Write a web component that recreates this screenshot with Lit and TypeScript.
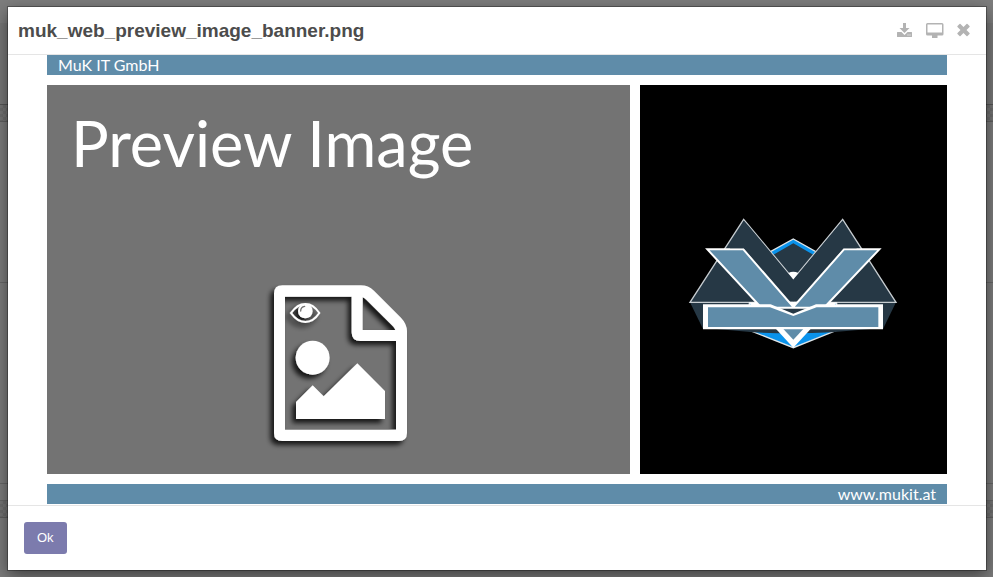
import { LitElement, html, css } from "lit";
import { customElement } from "lit/decorators.js";

@customElement("preview-banner")
class PreviewBanner extends LitElement {
  static styles = css`
    :host {
      flex: 1;
      display: flex;
      flex-direction: column;
      gap: 10px;
      color: #fff;
      font-family: Lato, sans-serif;
    }
    .strip {
      display: flex;
      align-items: center;
      flex: none;
      height: 20px;
      padding: 0 11px;
      background: #5f8ca9;
      font-size: 16px;
      line-height: 20px;
    }
    .end {
      justify-content: flex-end;
    }
    .panels {
      flex: 1;
      display: grid;
      grid-template-columns: 583fr 307fr;
      gap: 10px;
    }
    .gray {
      display: flex;
      flex-direction: column;
      background: #737373;
    }
    .title {
      margin: 0;
      padding: 18px 24px 0;
      font-size: 63px;
      line-height: 80px;
      font-weight: 400;
      white-space: nowrap;
    }
    .file {
      align-self: center;
      width: 170px;
      height: 180px;
      margin-top: auto;
      margin-left: 2px;
      margin-bottom: 19px;
    }
    .dark {
      display: flex;
      align-items: center;
      justify-content: center;
      padding: 5px 0 0 2px;
      background: #000;
    }
    .logo {
      width: 230px;
      height: 155px;
    }
  `;

  render() {
    return html`
      <div class="strip">MuK IT GmbH</div>
      <div class="panels">
        <div class="gray">
          <h2 class="title">Preview Image</h2>
          ${this.fileIcon()}
        </div>
        <div class="dark">${this.logo()}</div>
      </div>
      <div class="strip end">www.mukit.at</div>
    `;
  }

  private fileIcon() {
    return html`<svg class="file" viewBox="0 0 510 540" aria-hidden="true">
      <defs>
        <filter id="shade" x="-10%" y="-10%" width="120%" height="120%">
          <feDropShadow dx="-11" dy="12" stdDeviation="8" flood-color="#000" flood-opacity="0.8"></feDropShadow>
        </filter>
      </defs>
      <g filter="url(#shade)" fill="#fff">
        <path fill-rule="evenodd" d="M82 31H318Q340 31 357 47L438 128Q456 147 456 168V474Q456 498 432 498H82Q57 498 57 474V56Q57 31 82 31ZM90 65V464H423V198H316Q290 198 290 172V65ZM323 67V165H421Q419 159 414 154L334 74Q329 69 323 67Z"></path>
        <circle cx="173" cy="248" r="51"></circle>
        <path d="M123 381L173 331L206 364L307 265L390 348V432H123Z"></path>
        <path fill="none" stroke="#fff" stroke-width="6" d="M108 114Q127 87 151 87Q175 87 193 114Q175 141 151 141Q127 141 108 114Z"></path>
        <circle cx="151" cy="108" r="22"></circle>
        <path fill="none" stroke="#737373" stroke-width="4" stroke-linecap="round" d="M137 108Q137 96 149 94"></path>
      </g>
    </svg>`;
  }

  private logo() {
    return html`<svg class="logo" viewBox="0 0 690 465" aria-hidden="true">
      <path fill="#263845" d="M30 292L69 372H609L648 292Z"></path>
      <path fill="#0a93ec" stroke="#dfe5e8" stroke-width="4" d="M340 102L470 175V376L340 428L208 376V175Z"></path>
      <path fill="#263845" d="M340 115L450 178V330H230V178Z"></path>
      <path fill="#263845" d="M110 372H570L455 382Q340 388 220 382Z"></path>
      <path fill="#263845" stroke="#c6ccd0" stroke-width="4" d="M191 43L340 222L488 43L648 292H30Z"></path>
      <path fill="#fff" d="M325 204Q340 197 355 204L340 223Z"></path>
      <path fill="#fff" d="M206 292H472L455 308H222Z"></path>
      <path fill="#5f8ca9" stroke="#fff" stroke-width="6" d="M82 133H190L340 306L492 133H598L432 308H244Z"></path>
      <path fill="#263845" d="M340 224L205 62L191 47L150 130H192L340 290L490 130H530L488 47L475 62Z"></path>
      <path fill="#fff" d="M326 290H354L340 306Z"></path>
      <path fill="#fff" d="M286 370H394L340 428Z"></path>
      <path fill="#5f8ca9" d="M308 370H372L340 404Z"></path>
      <path fill="#fff" d="M69 298H272L340 326L408 298H609V373H69Z"></path>
      <path fill="#5f8ca9" d="M84 307H270L340 333L410 307H595V366H84Z"></path>
    </svg>`;
  }
}

@customElement("app-root")
class AppRoot extends LitElement {
  static styles = css`
    :host {
      display: block;
      font-family: "Liberation Sans", Arial, sans-serif;
      color: #4c4c4c;
    }
    .backdrop {
      box-sizing: border-box;
      display: flex;
      min-height: 100vh;
      padding: 7px 7px 7px 8px;
      background:
        linear-gradient(
          #7d7d7d 23px,
          #777 23px 104px,
          #555 104px 105px,
          transparent 105px 121px,
          #5f5f5f 121px 122px,
          #7b7b7b 122px 282px,
          #666 282px 283px,
          #7b7b7b 283px 483px,
          #666 483px 484px,
          #7b7b7b 484px 500px,
          #666 500px 501px,
          transparent 501px 517px,
          #5f5f5f 517px 518px,
          #7b7b7b 518px
        ),
        repeating-conic-gradient(#747474 0 25%, #6c6c6c 0 50%) 0 0 / 6px 6px;
    }
    .dialog {
      flex: 1;
      display: flex;
      flex-direction: column;
      background: #fff;
      box-shadow: 0 0 0 1px rgba(0, 0, 0, 0.3), 0 5px 15px rgba(0, 0, 0, 0.5);
    }
    header {
      display: flex;
      align-items: center;
      justify-content: space-between;
      box-sizing: border-box;
      height: 48px;
      padding: 0 16px 0 10px;
      border-bottom: 1px solid #e5e5e5;
    }
    h1 {
      margin: 0;
      font-size: 19px;
      line-height: 24px;
      font-weight: 700;
    }
    .tools {
      display: flex;
      align-items: center;
      gap: 13px;
      padding-bottom: 2px;
    }
    .tool {
      display: flex;
      padding: 0;
      border: 0;
      background: none;
      color: #b3b3b3;
      cursor: pointer;
    }
    .tool svg {
      display: block;
      height: 16px;
      fill: currentColor;
    }
    main {
      flex: 1;
      display: flex;
      padding: 0 39px 1px;
    }
    footer {
      padding: 16px;
      border-top: 1px solid #e5e5e5;
    }
    .ok {
      display: block;
      height: 32px;
      padding: 0 13px;
      border: 0;
      border-radius: 3px;
      background: #7c7bad;
      color: #fff;
      font: 13px/20px "Liberation Sans", Arial, sans-serif;
      cursor: pointer;
    }
  `;

  render() {
    return html`
      <div class="backdrop">
        <div class="dialog" role="dialog" aria-labelledby="name">
          <header>
            <h1 id="name">muk_web_preview_image_banner.png</h1>
            <div class="tools">
              <button class="tool" aria-label="Download">
                <svg width="16" viewBox="0 0 16 16"><path fill-rule="evenodd" d="M6 1H9V6H12.500L7.500 11L2.500 6H6ZM0.500 10H4.500L7.500 13L10.500 10H14.500Q15 10 15 10.500V14.500Q15 15 14.500 15H0.500Q0 15 0 14.500V10.500Q0 10 0.500 10ZM10.500 12.500V13.500H11.500V12.500ZM12.500 12.500V13.500H13.500V12.500Z"></path></svg>
              </button>
              <button class="tool" aria-label="Full screen">
                <svg width="18" viewBox="0 0 18 16"><path fill-rule="evenodd" d="M1.500 1H16Q17.500 1 17.500 2.500V12Q17.500 13.500 16 13.500H11.500V16H6V13.500H1.500Q0 13.500 0 12V2.500Q0 1 1.500 1ZM1.500 2.500V10.500H16V2.500Z"></path></svg>
              </button>
              <button class="tool" aria-label="Close">
                <svg width="13" viewBox="0 0 13 16"><path d="M3.500 2Q3 1.500 2.500 2L0.500 4Q0 4.500 0.500 5L3.500 8L0.500 11Q0 11.500 0.500 12L2.500 14Q3 14.500 3.500 14L6.500 11L9.500 14Q10 14.500 10.500 14L12.500 12Q13 11.500 12.500 11L9.500 8L12.500 5Q13 4.500 12.500 4L10.500 2Q10 1.500 9.500 2L6.500 5Z"></path></svg>
              </button>
            </div>
          </header>
          <main><preview-banner></preview-banner></main>
          <footer><button class="ok">Ok</button></footer>
        </div>
      </div>
    `;
  }
}
